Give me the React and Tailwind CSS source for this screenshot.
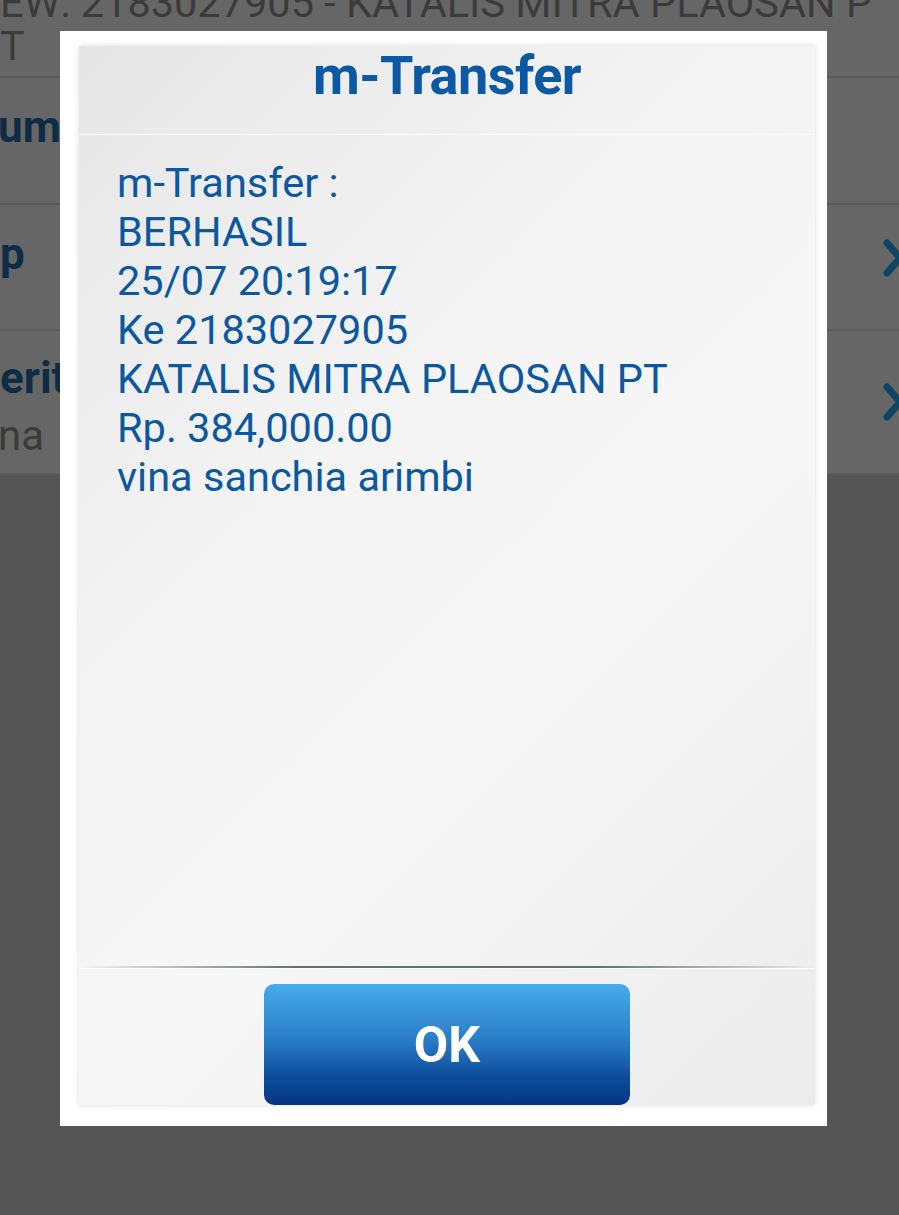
import React from 'react';

const font = { fontFamily: 'Roboto, "Noto Sans", Arial, sans-serif' };

function Chevron({ className }) {
    return (
        <svg width="24" height="40" viewBox="0 0 24 40" className={`shrink-0 -mr-[7px] ${className || ''}`}>
            <polyline points="5,5 18,20 5,35" fill="none" stroke="#0d4566" strokeWidth="7" strokeLinecap="round" strokeLinejoin="round" />
        </svg>
    );
}

function Row({ children, chevron, height }) {
    return (
        <div className={`flex items-center justify-between border-b-2 border-[#5a5a5a] bg-[#666666] ${height}`}>
            {children}
            {chevron}
        </div>
    );
}

export default function App() {
    const lines = [
        'm-Transfer :',
        'BERHASIL',
        '25/07 20:19:17',
        'Ke 2183027905',
        'KATALIS MITRA PLAOSAN PT',
        'Rp. 384,000.00',
        'vina sanchia arimbi',
    ];

    return (
        <div className="relative w-[899px] h-[1215px] overflow-hidden bg-[#555555]" style={font}>
            {/* dimmed page behind the dialog */}
            <div className="bg-[#666666]">
                <div className="h-[78px] border-b-2 border-[#5a5a5a] overflow-hidden">
                    <div className="mt-[-19px] text-[41.5px] leading-[43px] text-[#3b3b3b] whitespace-nowrap">
                        <div>EW: 2183027905 - KATALIS MITRA PLAOSAN P</div>
                        <div>T</div>
                    </div>
                </div>
                <Row height="h-[127px]">
                    <span className="text-[44px] font-bold text-[#0f2c45] leading-none -ml-[2px] -mt-[28px]">um</span>
                </Row>
                <Row height="h-[126px]" chevron={<Chevron className="-mt-[18px]" />}>
                    <span className="text-[44px] font-bold text-[#0f2c45] leading-none -mt-[26px]">p</span>
                </Row>
                <Row height="h-[144px]" chevron={<Chevron />}>
                    <div className="flex flex-col mt-[10px]">
                        <span className="text-[44px] font-bold text-[#0f2c45] leading-[57px]">erit</span>
                        <span className="text-[42px] text-[#3b3b3b] leading-[57px] -ml-[2px]">na</span>
                    </div>
                </Row>
            </div>

            {/* dialog */}
            <div className="absolute left-[60px] top-[31px] w-[767px] h-[1095px] bg-white">
                <div className="ml-[19px] mt-[15px] w-[736px] h-[1059px] flex flex-col bg-[linear-gradient(135deg,#e6e6e6_0%,#f3f3f3_35%,#f7f7f7_60%,#ebebeb_100%)] shadow-[0_0_6px_rgba(0,0,0,0.14)]">
                    <div className="h-[89px] flex justify-center border-b border-[#fafafa] pt-[6px]">
                        <h1 className="text-[54px] font-bold text-[#0b59a3] leading-[48px] tracking-[-0.5px]">m-Transfer</h1>
                    </div>
                    <div className="flex-1 pl-[38px] pt-[23px]">
                        {lines.map((l) => (
                            <div key={l} className="text-[41.5px] leading-[49px] text-[#0c58a0] whitespace-nowrap">
                                {l}
                            </div>
                        ))}
                    </div>
                    <div className="h-[2px] bg-[linear-gradient(90deg,rgba(100,108,122,0)_0%,#646c7a_30%,#646c7a_70%,rgba(100,108,122,0)_100%)]" />
                    <div className="h-[1px] bg-white" />
                    <div className="flex justify-center pt-[15px]">
                        <button className="w-[366px] h-[121px] rounded-[10px] bg-[linear-gradient(180deg,#47abeb_0%,#2a7ec8_45%,#0f4f9e_75%,#033583_100%)] text-white text-[50px] font-bold leading-none">
                            OK
                        </button>
                    </div>
                </div>
            </div>
        </div>
    );
}
